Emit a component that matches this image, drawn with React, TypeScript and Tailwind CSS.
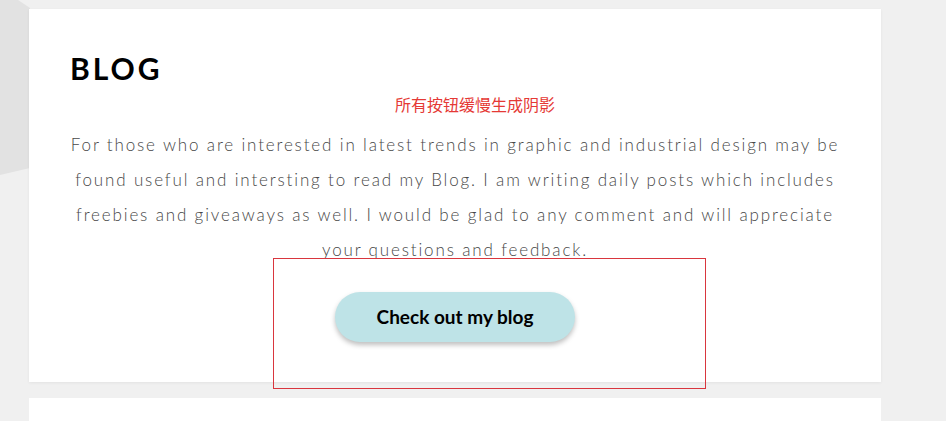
const App = () => {
    return (
        <div className="relative h-[421px] w-[946px] overflow-hidden bg-[#f0f0f0]" style={{ fontFamily: "Lato, 'Noto Sans CJK SC', sans-serif" }}>
            {/* background shape on the left */}
            <svg className="absolute left-0 top-0" width="40" height="190" viewBox="0 0 40 190">
                <polygon points="0,0 18,0 30,8 30,168 0,175" fill="#e2e2e2" />
            </svg>

            {/* Blog card */}
            <section className="relative ml-[29px] mt-[9px] w-[852px] bg-white pt-[41px] pb-[40px] shadow-[0_1px_3px_rgba(0,0,0,0.06)]">
                <h2 className="pl-[41px] text-[30px] font-bold leading-[36px] tracking-[3px] text-black">BLOG</h2>
                <p className="mt-[7px] pl-10 text-center text-[16px] leading-[24px] text-[#e53935]">所有按钮缓慢生成阴影</p>
                <p className="mt-[10px] text-center text-[17px] font-light leading-[35px] tracking-[1.85px] text-[#484848] whitespace-nowrap">
                    For those who are interested in latest trends in graphic and industrial design may be<br />
                    found useful and intersting to read my Blog. I am writing daily posts which includes<br />
                    freebies and giveaways as well. I would be glad to any comment and will appreciate<br />
                    your questions and feedback.
                </p>
                <div className="mt-[25px] flex justify-center">
                    <button className="h-[50px] w-[240px] rounded-full bg-[#bee3e7] text-[19px] font-bold text-black shadow-[0_3px_5px_rgba(0,0,0,0.25)]">
                        Check out my blog
                    </button>
                </div>
            </section>

            {/* next card */}
            <section className="ml-[29px] mt-[16px] h-[40px] w-[852px] bg-white" />

            {/* annotation frame */}
            <div className="absolute left-[273px] top-[258px] h-[131px] w-[433px] border border-[#d9363e]" />
        </div>
    )
}

export default App;
